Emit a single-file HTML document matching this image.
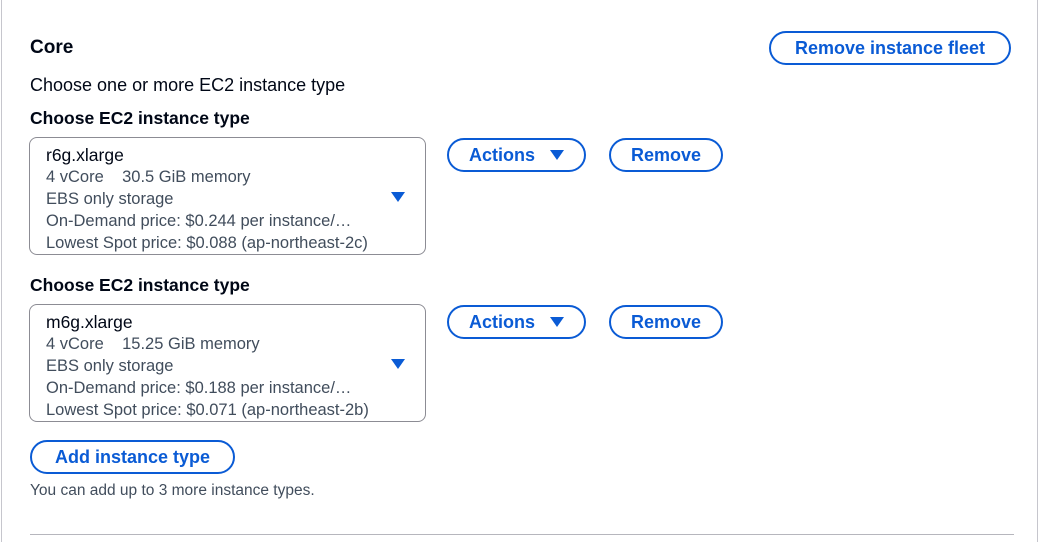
<!DOCTYPE html>
<html style="height:542px;overflow:hidden"><head><style>
*{margin:0;padding:0;box-sizing:border-box}
body{width:1040px;height:542px;background:#fff;font-family:"Liberation Sans",sans-serif;color:#000716;position:relative;overflow:hidden}
.a{position:absolute;white-space:nowrap}
.frame{left:1px;top:-2px;width:1037px;height:550px;border:1px solid #c6c6cd}
.btn{position:absolute;border:2px solid #0a5bd5;border-radius:18px;color:#0a5bd5;font-weight:bold;font-size:18px;display:flex;align-items:center;justify-content:center;background:#fff}
.box{position:absolute;left:29px;width:397px;height:118px;border:1px solid #8c8c94;border-radius:8px;padding:6px 0 0 16px}
.box .t{font-size:17.5px;color:#000716;line-height:22px}
.box .l{font-size:16.5px;color:#414d5c;line-height:22px}
.tri{width:0;height:0;border-left:7px solid transparent;border-right:7px solid transparent;border-top:10px solid #0a5bd5;display:inline-block}
.lbl{font-size:17.5px;font-weight:bold}
</style></head><body>
<div class="a frame"></div>
<div class="a" style="left:30px;top:37px;font-size:19px;font-weight:bold">Core</div>
<div class="btn" style="left:769px;top:31px;width:242px;height:34px">Remove instance fleet</div>
<div class="a" style="left:30px;top:75px;font-size:18px">Choose one or more EC2 instance type</div>
<div class="a lbl" style="left:30px;top:108px">Choose EC2 instance type</div>
<div class="box" style="top:137px">
<div class="t">r6g.xlarge</div>
<div class="l">4 vCore &nbsp;&nbsp;&nbsp;30.5 GiB memory</div>
<div class="l">EBS only storage</div>
<div class="l">On-Demand price: $0.244 per instance/…</div>
<div class="l">Lowest Spot price: $0.088 (ap-northeast-2c)</div>
<div class="tri" style="position:absolute;left:361px;top:54px"></div>
</div>
<div class="btn" style="left:447px;top:138px;width:139px;height:34px">Actions&nbsp;&nbsp;&nbsp;<span class="tri" style="border-width:10px 7px 0 7px"></span></div>
<div class="btn" style="left:609px;top:138px;width:114px;height:34px">Remove</div>
<div class="a lbl" style="left:30px;top:275px">Choose EC2 instance type</div>
<div class="box" style="top:304px">
<div class="t">m6g.xlarge</div>
<div class="l">4 vCore &nbsp;&nbsp;&nbsp;15.25 GiB memory</div>
<div class="l">EBS only storage</div>
<div class="l">On-Demand price: $0.188 per instance/…</div>
<div class="l">Lowest Spot price: $0.071 (ap-northeast-2b)</div>
<div class="tri" style="position:absolute;left:361px;top:54px"></div>
</div>
<div class="btn" style="left:447px;top:305px;width:139px;height:34px">Actions&nbsp;&nbsp;&nbsp;<span class="tri" style="border-width:10px 7px 0 7px"></span></div>
<div class="btn" style="left:609px;top:305px;width:114px;height:34px">Remove</div>
<div class="btn" style="left:30px;top:440px;width:205px;height:34px">Add instance type</div>
<div class="a" style="left:30px;top:482px;font-size:15.5px;color:#414d5c">You can add up to 3 more instance types.</div>
<div class="a" style="left:30px;top:534px;width:984px;height:1px;background:#b6b6bd"></div>
</body></html>
